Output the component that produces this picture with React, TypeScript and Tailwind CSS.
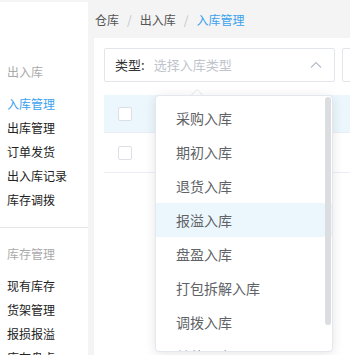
import React from "react";

const font = { fontFamily: '"Noto Sans CJK SC", "Noto Sans", sans-serif' };

function SideTitle({ children }: { children: React.ReactNode }) {
  return <div className="h-6 leading-6 text-[12px] text-[#aaaaaa]">{children}</div>;
}
function SideItem({ children, active }: { children: React.ReactNode; active?: boolean }) {
  return (
    <div className={`h-6 leading-6 text-[12px] ${active ? "text-[#3aa2ee]" : "text-[#222222]"}`}>{children}</div>
  );
}

export default function App() {
  const items = ["采购入库", "期初入库", "退货入库", "报溢入库", "盘盈入库", "打包拆解入库", "调拨入库", "其他入库"];
  return (
    <div style={font} className="relative w-[350px] h-[355px] overflow-hidden bg-[#f4f4f4] pt-[2px] flex">
      {/* Sidebar */}
      <div className="w-[88px] shrink-0 bg-white pl-[7px] pt-[58px]">
        <SideTitle>出入库</SideTitle>
        <div className="mt-2">
          <SideItem active>入库管理</SideItem>
          <SideItem>出库管理</SideItem>
          <SideItem>订单发货</SideItem>
          <SideItem>出入库记录</SideItem>
          <SideItem>库存调拨</SideItem>
        </div>
        <div className="-ml-[7px] mt-[15px] h-px bg-[#e6e6e6]" />
        <div className="mt-[14px]">
          <SideTitle>库存管理</SideTitle>
        </div>
        <div className="mt-2">
          <SideItem>现有库存</SideItem>
          <SideItem>货架管理</SideItem>
          <SideItem>报损报溢</SideItem>
          <SideItem>库存盘点</SideItem>
        </div>
      </div>

      {/* Main */}
      <div className="flex-1 pl-[6px] flex flex-col">
        <div className="h-9 leading-9 pl-px text-[12px] flex items-center">
          <span className="text-[#555555]">仓库</span>
          <span className="mx-[8px] text-[#c0c4cc]">/</span>
          <span className="text-[#555555]">出入库</span>
          <span className="mx-[8px] text-[#c0c4cc]">/</span>
          <span className="text-[#3aa2ee]">入库管理</span>
        </div>
        <div className="flex-1 bg-white pl-[10px] pt-[10px]">
          <div className="flex gap-[7px]">
            <div className="w-[231px] h-[34px] shrink-0 border border-[#e2e5ea] rounded-[2px] flex items-center pl-[10px] pr-[10px] text-[13px]">
              <span className="text-[#333333]">类型:</span>
              <span className="ml-[9px] text-[#c0c4cc]">选择入库类型</span>
              <svg className="ml-auto mr-[2px]" width="12" height="8" viewBox="0 0 12 8">
                <path d="M1 6.5 L6 1.5 L11 6.5" fill="none" stroke="#b6bcc6" strokeWidth="1.1" />
              </svg>
            </div>
            <div className="w-[40px] h-[34px] shrink-0 border border-[#e2e5ea] rounded-[2px]" />
          </div>
          <div className="mt-[13px]">
            <div className="h-[38px] bg-[#ebf7fd] flex items-center pl-[14px] border-b border-[#ebeef5]">
              <div className="w-[14px] h-[14px] bg-white border border-[#dcdfe6] rounded-[2px]" />
            </div>
            <div className="h-[40px] flex items-center pl-[14px] border-b border-[#ebeef5]">
              <div className="w-[14px] h-[14px] bg-white border border-[#dcdfe6] rounded-[2px]" />
            </div>
          </div>
        </div>
      </div>

      {/* Dropdown */}
      <div className="absolute left-[155px] top-[95px] w-[178px] h-[257px]">
        <div className="absolute left-[36px] -top-[6px] w-0 h-0 border-l-[6px] border-r-[6px] border-b-[6px] border-l-transparent border-r-transparent border-b-[#e4e7ed]" />
        <div className="absolute left-[37px] -top-[5px] w-0 h-0 border-l-[5px] border-r-[5px] border-b-[5px] border-l-transparent border-r-transparent border-b-white" />
        <div className="w-full h-full bg-white border border-[#e4e7ed] rounded-[4px] shadow-[0_2px_12px_rgba(0,0,0,0.1)] overflow-hidden relative">
          <div className="pt-[5px]">
            {items.map((t, i) => (
              <div
                key={t}
                className={`h-[34px] leading-[34px] pl-[20px] text-[14px] text-[#606266] ${i === 3 ? "bg-[#ebf7fd]" : ""}`}
              >
                {t}
              </div>
            ))}
          </div>
          <div className="absolute right-[1px] top-[1px] w-[6px] h-[228px] rounded-[3px] bg-[#dcdde0]" />
        </div>
      </div>
    </div>
  );
}
